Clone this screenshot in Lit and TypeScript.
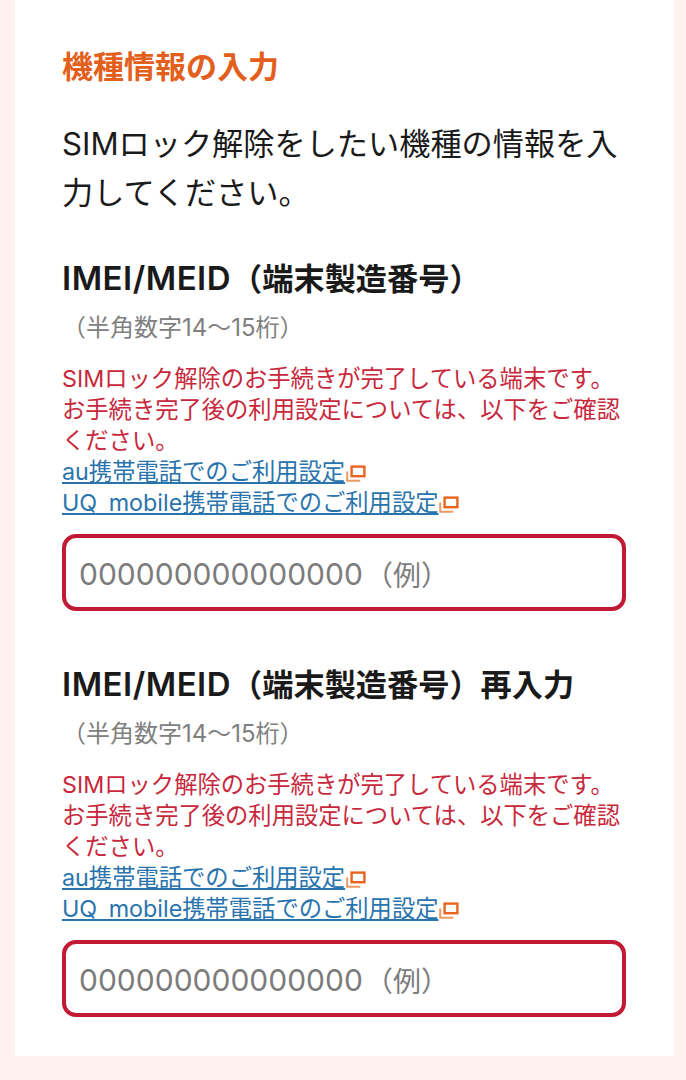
import { LitElement, html, css } from "lit";
import { customElement } from "lit/decorators.js";

const icon = html`<svg class="ext" viewBox="0 0 20 17" width="20" height="17" aria-hidden="true">
  <path d="M1.2 6.5v9.3h13" fill="none" stroke="#ec9a62" stroke-width="2"/>
  <rect x="5.6" y="1.6" width="12.8" height="9.6" fill="none" stroke="#e8641e" stroke-width="2.4"/>
</svg>`;

@customElement("app-root")
export class AppRoot extends LitElement {
  static styles = css`
    :host {
      display: block;
      height: 1080px;
      background: #fdf2ee;
      font-family: Inter, "Noto Sans CJK JP", sans-serif;
      color: #1a1a1a;
      overflow: hidden;
    }
    .card {
      box-sizing: border-box;
      margin-left: 15px;
      width: 659px;
      height: 1056px;
      background: #fff;
      padding: 46px 47px 0;
    }
    h2 {
      margin: 0;
      font-size: 31px;
      line-height: 42px;
      font-weight: 700;
      color: #e3601c;
    }
    .intro {
      margin: 32px 0 0;
      font-size: 31.2px;
      line-height: 49px;
      width: 565px;
    }
    .field { margin-top: 38px; }
    .field + .field { margin-top: 51px; }
    h3 {
      margin: 0;
      font-size: 31.2px;
      line-height: 44px;
      font-weight: 600;
      white-space: nowrap;
    }
    .latin {
      font-size: 33px;
      letter-spacing: 0.5px;
    }
    .hint {
      margin: 12px 0 0;
      font-size: 24px;
      line-height: 30px;
      color: #808080;
    }
    .note {
      margin: 20px 0 0;
      font-size: 23.3px;
      line-height: 31px;
      color: #c8283c;
      width: 565px;
    }
    .note a {
      color: #2a74ad;
      text-decoration: underline;
      word-spacing: 5px;
    }
    .ext { vertical-align: -2px; margin-left: 1px; }
    .input {
      box-sizing: border-box;
      margin-top: 16px;
      width: 564px;
      height: 77px;
      border: 4px solid #c01a34;
      border-radius: 14px;
      display: flex;
      align-items: center;
      padding: 2px 0 0 13px;
      font-size: 30px;
      color: #7c7c7c;
      white-space: nowrap;
    }
    .example {
      font-size: 28px;
      margin-left: 2px;
    }
  `;

  private field(suffix: string) {
    return html`<section class="field">
      <h3><span class="latin">IMEI/MEID</span>（端末製造番号）${suffix}</h3>
      <p class="hint">（半角数字14〜15桁）</p>
      <p class="note">
        SIMロック解除のお手続きが完了している端末です。お手続き完了後の利用設定については、以下をご確認ください。<br />
        <a href="#">au携帯電話でのご利用設定</a>${icon}<br />
        <a href="#">UQ mobile携帯電話でのご利用設定</a>${icon}
      </p>
      <div class="input">000000000000000<span class="example">（例）</span></div>
    </section>`;
  }

  render() {
    return html`<main class="card">
      <h2>機種情報の入力</h2>
      <p class="intro">SIMロック解除をしたい機種の情報を入力してください。</p>
      ${this.field("")}
      ${this.field("再入力")}
    </main>`;
  }
}
